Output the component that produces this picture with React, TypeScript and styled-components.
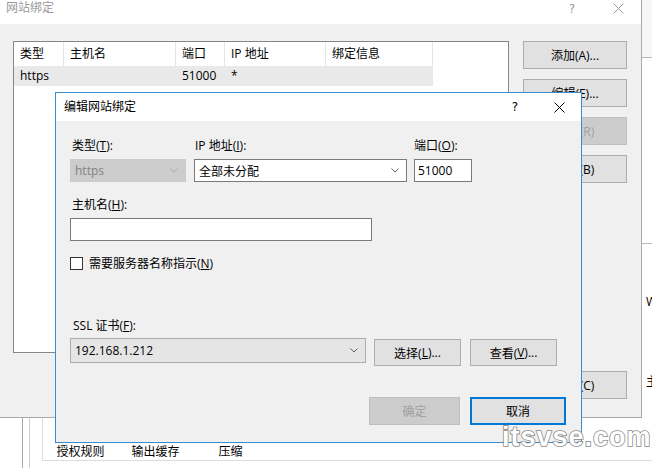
import React from 'react';
import styled, {createGlobalStyle} from 'styled-components';

const GlobalStyle = createGlobalStyle`
    html, body {
        margin: 0;
        padding: 0;
        background: #fff;
    }
    body {
        font-family: "Open Sans", "Noto Sans CJK SC", sans-serif;
        font-size: 12px;
        color: #000;
    }
    * {
        box-sizing: border-box;
    }
`

const Desktop = styled.div`
    position: relative;
    width: 652px;
    height: 468px;
    overflow: hidden;
    background: #fff;
`

/* window behind the dialogs */
const BackWindow = styled.div`
    position: absolute;
    inset: 0;
    display: flex;
    flex-direction: column;
`
const BackTop = styled.div`
    display: flex;
    height: 418px;
`
const CoveredArea = styled.div`
    width: 642px;
    flex: none;
`
const SidePane = styled.div`
    flex: 1;
    display: flex;
    flex-direction: column;
    overflow: hidden;
    white-space: nowrap;
`
const SideSection = styled.div<{$h: number; $bg?: string}>`
    height: ${props => props.$h}px;
    flex: none;
    background: ${props => props.$bg ?? '#fff'};
    border-bottom: 1px solid #b9b9b9;
`
const SideText = styled.div<{$top: number}>`
    padding: ${props => props.$top}px 0 0 4px;
    line-height: 16px;
`
const BackBottom = styled.div`
    flex: 1;
    display: flex;
`
const Gutter = styled.div<{$w: number; $line: string}>`
    width: ${props => props.$w}px;
    flex: none;
    border-right: 1px solid ${props => props.$line};
`
const Spacer = styled.div<{$w: number}>`
    width: ${props => props.$w}px;
    flex: none;
`
const FeaturePane = styled.div`
    flex: none;
    width: 620px;
    height: 43px;
    display: flex;
    align-items: flex-end;
    border-left: 1px solid #dcdcdc;
    border-bottom: 1px solid #dcdcdc;
`
const FeatureLabel = styled.div`
    width: 75px;
    text-align: center;
    line-height: 16px;
`

/* outer dialog */
const OuterDialog = styled.div`
    position: absolute;
    left: 0;
    top: 0;
    width: 642px;
    height: 418px;
    background: #f0f0f0;
    border-right: 1px solid #a9a9a9;
    border-bottom: 1px solid #a9a9a9;
    display: flex;
    flex-direction: column;
`
const TitleBar = styled.div<{$h: number}>`
    height: ${props => props.$h}px;
    flex: none;
    background: #fff;
    display: flex;
    align-items: flex-start;
`
const Title = styled.div<{$h: number; $inactive?: boolean; $pad: number}>`
    flex: 1;
    padding-left: ${props => props.$pad}px;
    line-height: ${props => props.$h}px;
    color: ${props => props.$inactive ? '#9a9a9a' : '#000'};
`
const TitleButton = styled.div<{$w: number; $h: number; $inactive?: boolean}>`
    width: ${props => props.$w}px;
    height: ${props => props.$h}px;
    display: flex;
    align-items: center;
    justify-content: center;
    color: ${props => props.$inactive ? '#9a9a9a' : '#000'};
    font-family: "DejaVu Sans", sans-serif;
    font-size: 12px;
`
const OuterBody = styled.div`
    flex: 1;
    display: flex;
    gap: 14px;
    padding: 17px 0 0 13px;
`
const ListView = styled.div`
    width: 496px;
    height: 312px;
    background: #fff;
    border: 1px solid #828790;
`
const ListHeader = styled.div`
    display: flex;
    height: 24px;
`
const HeaderCell = styled.div<{$w: number}>`
    width: ${props => props.$w}px;
    padding-left: 6px;
    line-height: 24px;
    border-right: 1px solid #e5e5e5;
`
const ListRow = styled.div`
    display: flex;
    width: 419px;
    height: 20px;
    background: #e9e9e9;
`
const RowCell = styled.div<{$w: number}>`
    width: ${props => props.$w}px;
    padding-left: 6px;
    line-height: 20px;
`
const ButtonColumn = styled.div`
    width: 104px;
    height: 358px;
    display: flex;
    flex-direction: column;
    gap: 10px;
`
const Button = styled.div<{$w?: number; $h?: number; $disabled?: boolean; $default?: boolean; $push?: boolean}>`
    width: ${props => props.$w ? props.$w + 'px' : '100%'};
    height: ${props => props.$h ?? 28}px;
    flex: none;
    display: flex;
    align-items: center;
    justify-content: center;
    background: ${props => props.$disabled ? '#cccccc' : '#e1e1e1'};
    border: ${props => props.$default ? '2px solid #0078d7' : `1px solid ${props.$disabled ? '#bfbfbf' : '#adadad'}`};
    color: ${props => props.$disabled ? '#a0a0a0' : '#000'};
    margin-top: ${props => props.$push ? 'auto' : '0'};
`

/* edit dialog */
const EditDialog = styled.div`
    position: absolute;
    left: 55px;
    top: 92px;
    width: 527px;
    height: 351px;
    border: 1px solid #3a8ccc;
    background: #f0f0f0;
    display: flex;
    flex-direction: column;
`
const EditBody = styled.div`
    flex: 1;
    display: flex;
    flex-direction: column;
    padding: 17px 15px 17px 14px;
`
const FieldRow = styled.div<{$top?: number}>`
    display: flex;
    align-items: flex-start;
    margin-top: ${props => props.$top ?? 0}px;
`
const Field = styled.div<{$w: number; $mr?: number}>`
    width: ${props => props.$w}px;
    margin-right: ${props => props.$mr ?? 0}px;
    display: flex;
    flex-direction: column;
`
const FieldLabel = styled.div<{$pad?: number; $gap?: number}>`
    line-height: 16px;
    padding-left: ${props => props.$pad ?? 2}px;
    margin-bottom: ${props => props.$gap ?? 5}px;
`
const ComboBox = styled.div<{$kind: 'disabled' | 'edit' | 'list'; $w?: number}>`
    width: ${props => props.$w ? props.$w + 'px' : '100%'};
    height: ${props => props.$kind === 'list' ? 25 : 23}px;
    display: flex;
    align-items: center;
    padding: 0 7px 0 4px;
    background: ${props => props.$kind === 'disabled' ? '#cccccc' : props.$kind === 'list' ? '#e5e5e5' : '#fff'};
    border: 1px solid ${props => props.$kind === 'disabled' ? '#cccccc' : props.$kind === 'list' ? '#acacac' : '#7a7a7a'};
    color: ${props => props.$kind === 'disabled' ? '#838383' : '#000'};
`
const ComboText = styled.span`
    flex: 1;
`
const TextBox = styled.div<{$w?: number}>`
    width: ${props => props.$w ? props.$w + 'px' : '100%'};
    height: 23px;
    padding-left: 3px;
    line-height: 21px;
    background: #fff;
    border: 1px solid #7a7a7a;
`
const CheckRow = styled.label`
    display: flex;
    align-items: center;
    gap: 6px;
    height: 16px;
    margin-top: 14px;
`
const CheckBox = styled.span`
    width: 13px;
    height: 13px;
    background: #fff;
    border: 1px solid #333;
`
const SslButtons = styled.div`
    display: flex;
    gap: 9px;
    margin: 1px 0 0 8px;
`
const Footer = styled.div`
    margin-top: auto;
    display: flex;
    justify-content: flex-end;
    gap: 10px;
`
const Watermark = styled.div`
    position: absolute;
    left: 502px;
    top: 421px;
    font-family: "Liberation Sans", sans-serif;
    font-weight: bold;
    font-size: 27px;
    line-height: 32px;
    letter-spacing: 1px;
    color: #fff;
    -webkit-text-stroke: 1.6px #8a8a8a;
    paint-order: stroke fill;
`

const Chevron: React.FC<{color: string}> = ({color}) => (
    <svg width="8" height="5" viewBox="0 0 8 5">
        <polyline points="0.5,0.5 4,4 7.5,0.5" fill="none" stroke={color} strokeWidth="1"/>
    </svg>
)

const CloseGlyph: React.FC<{color: string}> = ({color}) => (
    <svg width="11" height="11" viewBox="0 0 11 11">
        <path d="M0.5 0.5 L10.5 10.5 M10.5 0.5 L0.5 10.5" stroke={color} strokeWidth="1"/>
    </svg>
)

const columns = [
    {title: '类型', w: 50},
    {title: '主机名', w: 112},
    {title: '端口', w: 49},
    {title: 'IP 地址', w: 101},
    {title: '绑定信息', w: 107},
]
const row = ['https', '', '51000', '*', '']

export default function App() {
    return (
        <Desktop>
            <GlobalStyle/>
            <BackWindow>
                <BackTop>
                    <CoveredArea/>
                    <SidePane>
                        <SideSection $h={58} $bg="#f6f6f6"/>
                        <SideSection $h={186}/>
                        <SideText $top={50}>W</SideText>
                        <SideText $top={64}>主</SideText>
                    </SidePane>
                </BackTop>
                <BackBottom>
                    <Gutter $w={23} $line="#a6a6a6"/>
                    <Gutter $w={7} $line="#cfcfcf"/>
                    <Spacer $w={12}/>
                    <FeaturePane>
                        <FeatureLabel>授权规则</FeatureLabel>
                        <FeatureLabel>输出缓存</FeatureLabel>
                        <FeatureLabel>压缩</FeatureLabel>
                    </FeaturePane>
                </BackBottom>
            </BackWindow>

            <OuterDialog>
                <TitleBar $h={24}>
                    <Title $h={16} $pad={6} $inactive>网站绑定</Title>
                    <TitleButton $w={46} $h={18} $inactive>?</TitleButton>
                    <TitleButton $w={46} $h={17}><CloseGlyph color="#9a9a9a"/></TitleButton>
                </TitleBar>
                <OuterBody>
                    <ListView>
                        <ListHeader>
                            {columns.map(c => <HeaderCell key={c.title} $w={c.w}>{c.title}</HeaderCell>)}
                        </ListHeader>
                        <ListRow>
                            {row.map((v, i) => <RowCell key={i} $w={columns[i].w}>{v}</RowCell>)}
                        </ListRow>
                    </ListView>
                    <ButtonColumn>
                        <Button>添加(A)...</Button>
                        <Button>编辑(E)...</Button>
                        <Button $disabled>删除(R)</Button>
                        <Button>浏览(B)</Button>
                        <Button $push>关闭(C)</Button>
                    </ButtonColumn>
                </OuterBody>
            </OuterDialog>

            <EditDialog>
                <TitleBar $h={28}>
                    <Title $h={28} $pad={8}>编辑网站绑定</Title>
                    <TitleButton $w={44} $h={28}>?</TitleButton>
                    <TitleButton $w={44} $h={28}><CloseGlyph color="#000"/></TitleButton>
                </TitleBar>
                <EditBody>
                    <FieldRow>
                        <Field $w={116} $mr={8}>
                            <FieldLabel>类型(<u>T</u>):</FieldLabel>
                            <ComboBox $kind="disabled">
                                <ComboText>https</ComboText>
                                <Chevron color="#a8a8a8"/>
                            </ComboBox>
                        </Field>
                        <Field $w={213} $mr={7}>
                            <FieldLabel $pad={1}>IP 地址(<u>I</u>):</FieldLabel>
                            <ComboBox $kind="edit">
                                <ComboText>全部未分配</ComboText>
                                <Chevron color="#606060"/>
                            </ComboBox>
                        </Field>
                        <Field $w={58}>
                            <FieldLabel $pad={0}>端口(<u>O</u>):</FieldLabel>
                            <TextBox>51000</TextBox>
                        </Field>
                    </FieldRow>
                    <FieldRow $top={15}>
                        <Field $w={302}>
                            <FieldLabel>主机名(<u>H</u>):</FieldLabel>
                            <TextBox/>
                        </Field>
                    </FieldRow>
                    <CheckRow>
                        <CheckBox/>
                        <span>需要服务器名称指示(<u>N</u>)</span>
                    </CheckRow>
                    <FieldRow $top={47}>
                        <Field $w={487}>
                            <FieldLabel $pad={3} $gap={4}>SSL 证书(<u>F</u>):</FieldLabel>
                            <FieldRow>
                                <ComboBox $kind="list" $w={297}>
                                    <ComboText>192.168.1.212</ComboText>
                                    <Chevron color="#606060"/>
                                </ComboBox>
                                <SslButtons>
                                    <Button $w={87} $h={27}>选择(<u>L</u>)...</Button>
                                    <Button $w={87} $h={27}>查看(<u>V</u>)...</Button>
                                </SslButtons>
                            </FieldRow>
                        </Field>
                    </FieldRow>
                    <Footer>
                        <Button $w={91} $disabled>确定</Button>
                        <Button $w={96} $default>取消</Button>
                    </Footer>
                </EditBody>
            </EditDialog>

            <Watermark>itsvse.com</Watermark>
        </Desktop>
    );
}
